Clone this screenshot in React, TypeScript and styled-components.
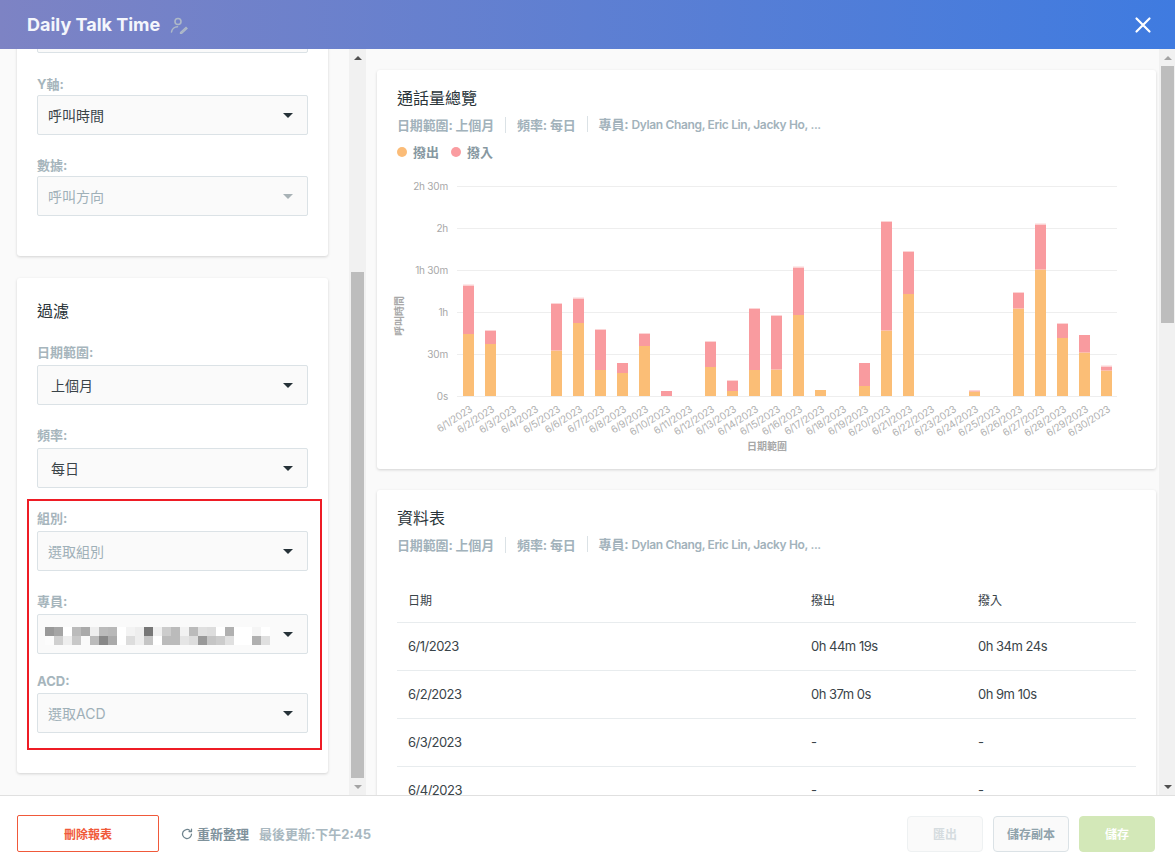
import * as React from 'react';
import styled, { createGlobalStyle } from 'styled-components';

const FONT = `Inter, 'Noto Sans CJK TC', sans-serif`;

const GlobalStyle = createGlobalStyle`
  html, body { margin: 0; padding: 0; height: 100%; }
  body { font-family: ${FONT}; background: #fff; overflow: hidden; }
  #root { height: 100%; }
  * { box-sizing: border-box; }
`;

const Page = styled.div`
  width: 1175px;
  height: 863px;
  display: flex;
  flex-direction: column;
`;

const Header = styled.header`
  height: 49px;
  flex: none;
  display: flex;
  align-items: center;
  padding: 0 23px 0 27px;
  background: linear-gradient(90deg, #7d83c4 0%, #3f7be0 100%);
  position: relative;
  z-index: 2;
`;

const Title = styled.h1`
  margin: 0;
  font-size: 18px;
  font-weight: 700;
  color: #f4f6fc;
`;

const OwnerIcon = styled.svg`
  width: 18px;
  height: 18px;
  margin-left: 10px;
  fill: none;
  stroke: #aeb9c8;
  stroke-width: 1.6;
  stroke-linecap: round;
`;

const CloseButton = styled.button`
  margin-left: auto;
  width: 18px;
  height: 18px;
  padding: 0;
  border: none;
  background: none;
  display: flex;
`;

const Body = styled.div`
  flex: 1;
  min-height: 0;
  display: flex;
  background: #fafafa;
`;

const LeftPane = styled.div`
  width: 349px;
  flex: none;
  overflow: hidden;
  padding: 0 21px 0 17px;
`;

const LeftContent = styled.div`
  margin-top: -36px;
  display: flex;
  flex-direction: column;
  gap: 22px;
`;

const Card = styled.section`
  background: #fff;
  border-radius: 3px;
  box-shadow: 0 1px 3px rgba(0, 0, 0, 0.16);
`;

const AxisCard = styled(Card)`
  padding: 0 20px 40px;
`;

const FilterCard = styled(Card)`
  padding: 22px 20px 23px;
`;

const CardTitle = styled.h2`
  margin: 0;
  font-size: 16px;
  line-height: 22px;
  font-weight: 400;
  color: #2a3439;
`;

const Field = styled.div<{ $top?: number }>`
  margin-top: ${(p) => p.$top ?? 0}px;
`;

const Label = styled.label<{ $gap?: number }>`
  display: block;
  font-size: 13px;
  line-height: 18px;
  font-weight: 700;
  color: #a6b5bc;
  margin-bottom: ${(p) => p.$gap ?? 3}px;
`;

const Select = styled.div<{ $inset?: number }>`
  height: 40px;
  display: flex;
  align-items: center;
  justify-content: space-between;
  padding: 0 14px 0 ${(p) => p.$inset ?? 10}px;
  background: #fafafa;
  border: 1px solid #dbe2e6;
  border-radius: 2px;
`;

const SelectText = styled.span<{ $muted?: boolean }>`
  font-size: 14px;
  color: ${(p) => (p.$muted ? '#9fb0b8' : '#3a4449')};
`;

const Caret = styled.i<{ $muted?: boolean }>`
  width: 0;
  height: 0;
  border-left: 5px solid transparent;
  border-right: 5px solid transparent;
  border-top: 5px solid ${(p) => (p.$muted ? '#a8b2b6' : '#263238')};
`;

const Highlight = styled.div`
  margin: 11px -14px 0 -10px;
  padding: 8px 12px 15px 8px;
  border: 2px solid #ee1c25;
`;

const MosaicSvg = styled.svg`
  display: block;
  margin: 4px 0 0 -3px;
`;

const Scrollbar = styled.div<{ $w: number }>`
  width: ${(p) => p.$w}px;
  flex: none;
  background: #f1f1f1;
  display: flex;
  flex-direction: column;
`;

const ScrollArrow = styled.div<{ $down?: boolean; $dim?: boolean }>`
  width: 13px;
  height: 17px;
  margin-left: 2px;
  flex: none;
  display: flex;
  align-items: center;
  justify-content: center;
  &::after {
    content: '';
    border-left: 4px solid transparent;
    border-right: 4px solid transparent;
    ${(p) => `border-${p.$down ? 'top' : 'bottom'}: 4px solid ${p.$dim ? '#a3a3a3' : '#505050'};`}
  }
`;

const ScrollGap = styled.div<{ $h?: number }>`
  ${(p) => (p.$h !== undefined ? `height: ${p.$h}px; flex: none;` : 'flex: 1;')}
`;

const ScrollThumb = styled.div<{ $h: number }>`
  width: 13px;
  height: ${(p) => p.$h}px;
  margin-left: 2px;
  flex: none;
  background: #bdbdbd;
`;

const RightPane = styled.div`
  flex: 1;
  min-width: 0;
  overflow: hidden;
  padding: 21px 3px 0 11px;
  display: flex;
  flex-direction: column;
  gap: 21px;
`;

const ChartCard = styled(Card)`
  flex: none;
  height: 399px;
  padding: 17px 20px 0;
`;

const TableCard = styled(Card)`
  flex: none;
  padding: 17px 20px 0;
`;

const Meta = styled.div`
  display: flex;
  align-items: center;
  margin-top: 7px;
  font-size: 13px;
  line-height: 16px;
  font-weight: 700;
  letter-spacing: -0.15px;
  color: #a2b2bb;
`;

const MetaItem = styled.span`
  & + &::before {
    content: '';
    display: inline-block;
    width: 1px;
    height: 16px;
    background: #dbe2e6;
    margin: 0 11px;
    vertical-align: -3px;
  }
`;

const Names = styled.span`
  font-size: 12px;
  font-weight: 600;
  letter-spacing: -0.35px;
`;

const Legend = styled.div`
  display: flex;
  gap: 12px;
  margin-top: 11px;
`;

const LegendItem = styled.span<{ $color: string }>`
  display: flex;
  align-items: center;
  gap: 6px;
  font-size: 13px;
  line-height: 16px;
  font-weight: 700;
  color: #8798a1;
  &::before {
    content: '';
    width: 10px;
    height: 10px;
    border-radius: 50%;
    background: ${(p) => p.$color};
  }
`;

const ChartSvg = styled.svg`
  display: block;
  margin: 11px 0 0 -20px;
  font-family: ${FONT};
`;

const Table = styled.table`
  width: 100%;
  margin-top: 25px;
  border-collapse: collapse;
  table-layout: fixed;
  font-size: 13px;
  color: #3a4449;
`;

const Th = styled.th<{ $w?: number }>`
  ${(p) => (p.$w ? `width: ${p.$w}px;` : '')}
  height: 44px;
  padding: 0 0 0 11px;
  text-align: left;
  font-weight: 400;
  font-size: 12px;
  border-bottom: 1px solid #e8ecee;
`;

const Td = styled.td`
  height: 48px;
  padding: 0 0 0 11px;
  letter-spacing: -0.5px;
  border-bottom: 1px solid #e8ecee;
`;

const Footer = styled.footer`
  height: 68px;
  flex: none;
  display: flex;
  align-items: center;
  padding: 8px 20px 0 17px;
  background: #fff;
  border-top: 1px solid #e0e0e0;
  position: relative;
  z-index: 2;
`;

const DangerButton = styled.button`
  width: 142px;
  height: 37px;
  background: #fff;
  border: 1px solid #f0593a;
  border-radius: 2px;
  color: #f0593a;
  font: 700 12px ${FONT};
`;

const Refresh = styled.span`
  display: flex;
  align-items: center;
  gap: 4px;
  margin-left: 22px;
  font-size: 13px;
  font-weight: 700;
  color: #7f929c;
`;

const Updated = styled.span`
  margin-left: 10px;
  font-size: 13px;
  font-weight: 700;
  color: #a9b8c0;
`;

const Actions = styled.div`
  margin-left: auto;
  display: flex;
  gap: 10px;
`;

const ActionButton = styled.button<{ $kind: 'disabled' | 'plain' | 'primary' }>`
  width: 76px;
  height: 36px;
  border-radius: 4px;
  font: 700 12px ${FONT};
  border: 1px solid
    ${(p) => (p.$kind === 'primary' ? '#d3e8b8' : p.$kind === 'plain' ? '#dbe2e6' : '#eef1f2')};
  background: ${(p) => (p.$kind === 'primary' ? '#d3e8b8' : '#fafafa')};
  color: ${(p) => (p.$kind === 'primary' ? '#fff' : p.$kind === 'plain' ? '#8fa2ab' : '#d5dcdf')};
`;

// [day index, top of orange, top of pink] in page pixels
const BARS: [number, number, number][] = [
  [0, 334, 285.5], [1, 344, 331], [4, 350.5, 304], [5, 323, 298.5], [6, 370, 330],
  [7, 373, 363], [8, 346, 334], [9, 396, 391], [11, 367, 342], [12, 391, 381],
  [13, 370, 309], [14, 369.5, 316], [15, 315, 267.5], [16, 390, 390], [18, 386, 363],
  [19, 330.5, 222], [20, 294, 252], [23, 391.5, 391], [25, 308.5, 293], [26, 269.5, 224.5],
  [27, 338, 324], [28, 352.5, 335], [29, 370.5, 366.5],
];
const NO_CAP = [7, 9, 16, 18, 28];

const TICKS: [string, number][] = [
  ['2h 30m', 186.5], ['2h', 228.5], ['1h 30m', 270.5], ['1h', 312.5], ['30m', 354.5], ['0s', 396.5],
];

// the chart svg starts at this page position
const OX = 377;
const OY = 171;

const Chart = () => (
  <ChartSvg width={779} height={290} viewBox={`${OX} ${OY} 779 290`}>
    {TICKS.map(([label, y]) => (
      <g key={label}>
        <line x1={457} x2={1117} y1={y} y2={y} stroke="#eeeeee" />
        <text x={448} y={y + 3.5} textAnchor="end" fontSize={10} letterSpacing={-0.2} fill="#a8a8a8">{label}</text>
      </g>
    ))}
    {BARS.map(([i, orange, pink]) => {
      const x = 463 + 22 * i;
      return (
        <g key={i}>
          <rect x={x} y={orange} width={11} height={396 - orange} fill="#fbbe76" />
          <rect x={x} y={pink} width={11} height={orange - pink} fill="#f99b9f" />
          {!NO_CAP.includes(i) && <rect x={x} y={pink - 1} width={11} height={1} fill="#fcd5d6" />}
        </g>
      );
    })}
    {Array.from({ length: 30 }, (_, i) => {
      const x = 473 + 22 * i;
      return (
        <text key={i} x={x} y={411} textAnchor="end" fontSize={10} letterSpacing={-0.3} fill="#b0b0b0" transform={`rotate(-33 ${x} 411)`}>
          {`6/${i + 1}/2023`}
        </text>
      );
    })}
    <text x={767} y={450} textAnchor="middle" fontSize={10} fontWeight={700} fill="#a8a8a8">日期範圍</text>
    <text x={0} y={0} textAnchor="middle" fontSize={10} fontWeight={700} fill="#a8a8a8" transform="translate(403 316) rotate(-90)">呼叫時間</text>
  </ChartSvg>
);

const MOSAIC: string[][] = [
  ['999', 'a5a5a5', 'fff', 'bbb', 'aaa', 'eee', 'bbb', 'b8b8b8', 'fff', 'f3f3f3', 'eee', '777', 'f0f0f0', 'ccc', 'bbb', 'f2f2f2', 'bbb', 'e0e0e0', 'ddd', 'fff', 'b0b0b0', 'fff', 'fff', 'f5f5f5', 'fff'],
  ['fcfcfc', 'd0d0d0', 'eee', 'c8c8c8', 'fafafa', 'bbb', '888', 'aaa', 'fff', 'ddd', 'eee', 'c5c5c5', 'fff', 'bbb', 'bbb', 'e5e5e5', 'ddd', '999', 'c5c5c5', 'ccc', 'e0e0e0', 'fff', 'fff', 'b0b0b0', 'e0e0e0'],
];

const Mosaic = () => (
  <MosaicSvg width={225} height={18}>
    {MOSAIC.map((row, r) =>
      row.map((c, i) => <rect key={`${r}-${i}`} x={i * 9} y={r * 9} width={9} height={9} fill={`#${c}`} />)
    )}
  </MosaicSvg>
);

const MetaRow = () => (
  <Meta>
    <MetaItem>日期範圍: 上個月</MetaItem>
    <MetaItem>頻率: 每日</MetaItem>
    <MetaItem>專員: <Names>Dylan Chang, Eric Lin, Jacky Ho, ...</Names></MetaItem>
  </Meta>
);

const ROWS = [
  ['6/1/2023', '0h 44m 19s', '0h 34m 24s'],
  ['6/2/2023', '0h 37m 0s', '0h 9m 10s'],
  ['6/3/2023', '-', '-'],
  ['6/4/2023', '-', '-'],
];

const App = (): JSX.Element => (
  <Page>
    <GlobalStyle />
    <Header>
      <Title>Daily Talk Time</Title>
      <OwnerIcon viewBox="0 0 18 18">
        <circle cx="8" cy="5.500" r="3" />
        <path d="M1.500 16c.4-3 3-5.300 6-5.300" />
        <path d="M10.500 16.500l5.500-5 1 1-5.500 5h-1z" strokeWidth="1.300" />
      </OwnerIcon>
      <CloseButton aria-label="close">
        <svg width="18" height="18" viewBox="0 0 18 18">
          <path d="M2.500 2.500l13 13M15.500 2.500l-13 13" stroke="#fff" strokeWidth="2.200" strokeLinecap="round" />
        </svg>
      </CloseButton>
    </Header>
    <Body>
      <LeftPane>
        <LeftContent>
          <AxisCard>
            <Select />
            <Field $top={22}>
              <Label $gap={2}>Y軸:</Label>
              <Select>
                <SelectText>呼叫時間</SelectText>
                <Caret />
              </Select>
            </Field>
            <Field $top={21}>
              <Label $gap={2}>數據:</Label>
              <Select>
                <SelectText $muted>呼叫方向</SelectText>
                <Caret $muted />
              </Select>
            </Field>
          </AxisCard>
          <FilterCard>
            <CardTitle>過濾</CardTitle>
            <Field $top={21}>
              <Label $gap={4}>日期範圍:</Label>
              <Select $inset={13}>
                <SelectText>上個月</SelectText>
                <Caret />
              </Select>
            </Field>
            <Field $top={21}>
              <Label $gap={4}>頻率:</Label>
              <Select $inset={13}>
                <SelectText>每日</SelectText>
                <Caret />
              </Select>
            </Field>
            <Highlight>
              <Field>
                <Label $gap={4}>組別:</Label>
                <Select>
                  <SelectText $muted>選取組別</SelectText>
                  <Caret />
                </Select>
              </Field>
              <Field $top={21}>
                <Label $gap={4}>專員:</Label>
                <Select>
                  <Mosaic />
                  <Caret />
                </Select>
              </Field>
              <Field $top={18}>
                <Label>ACD:</Label>
                <Select>
                  <SelectText $muted>選取ACD</SelectText>
                  <Caret />
                </Select>
              </Field>
            </Highlight>
          </FilterCard>
        </LeftContent>
      </LeftPane>
      <Scrollbar $w={17}>
        <ScrollArrow />
        <ScrollGap $h={206} />
        <ScrollThumb $h={506} />
        <ScrollGap />
        <ScrollArrow $down $dim />
      </Scrollbar>
      <RightPane>
        <ChartCard>
          <CardTitle>通話量總覽</CardTitle>
          <MetaRow />
          <Legend>
            <LegendItem $color="#fbbc78">撥出</LegendItem>
            <LegendItem $color="#fa9ca0">撥入</LegendItem>
          </Legend>
          <Chart />
        </ChartCard>
        <TableCard>
          <CardTitle>資料表</CardTitle>
          <MetaRow />
          <Table>
            <thead>
              <tr>
                <Th $w={403}>日期</Th>
                <Th $w={167}>撥出</Th>
                <Th>撥入</Th>
              </tr>
            </thead>
            <tbody>
              {ROWS.map((r) => (
                <tr key={r[0]}>
                  {r.map((c, i) => <Td key={i}>{c}</Td>)}
                </tr>
              ))}
            </tbody>
          </Table>
        </TableCard>
      </RightPane>
      <Scrollbar $w={16}>
        <ScrollArrow $dim />
        <ScrollThumb $h={257} />
        <ScrollGap />
        <ScrollArrow $down />
      </Scrollbar>
    </Body>
    <Footer>
      <DangerButton>刪除報表</DangerButton>
      <Refresh>
        <svg width="12" height="12" viewBox="0 0 24 24" fill="none" stroke="#6f848e" strokeWidth="2.500" strokeLinecap="round" strokeLinejoin="round">
          <path d="M21 12a9 9 0 1 1-3-6.700" />
          <path d="M21 2v5h-5" />
        </svg>
        重新整理
      </Refresh>
      <Updated>最後更新:下午2:45</Updated>
      <Actions>
        <ActionButton $kind="disabled">匯出</ActionButton>
        <ActionButton $kind="plain">儲存副本</ActionButton>
        <ActionButton $kind="primary">儲存</ActionButton>
      </Actions>
    </Footer>
  </Page>
);

export default App;
